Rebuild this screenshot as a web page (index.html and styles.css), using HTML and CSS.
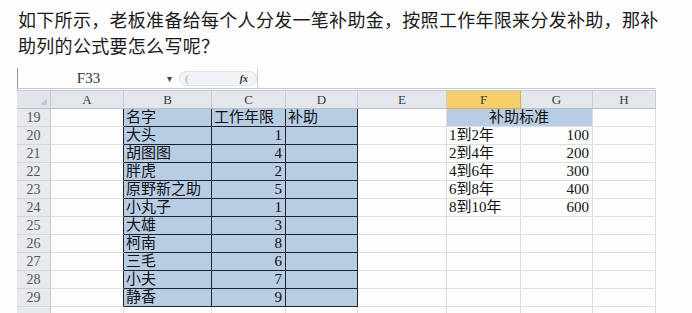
FILE: index.html
```html
<!DOCTYPE html>
<html lang="zh-CN">
<head>
    <meta charset="UTF-8">
    <title>补助公式</title>
    <link rel="stylesheet" href="styles.css">
</head>
<body>

    <p class="question">如下所示，老板准备给每个人分发一笔补助金，按照工作年限来分发补助，那补助列的公式要怎么写呢？</p>

    <div class="sheet">
        <div class="formula-bar">
            <div class="namebox">F33</div>
            <div class="drop">&#9662;</div>
            <div class="fxbox"><span class="paren">(</span><span class="fx">fx</span></div>
            <div class="formula"></div>
        </div>

        <div class="grid">
            <!-- cabecalho -->
            <div class="corner"></div>
            <div class="colhead">A</div>
            <div class="colhead">B</div>
            <div class="colhead">C</div>
            <div class="colhead">D</div>
            <div class="colhead">E</div>
            <div class="colhead active">F</div>
            <div class="colhead">G</div>
            <div class="colhead">H</div>

            <div class="rowhead">19</div>
            <div class="cell edge"></div>
            <div class="cell blk">名字</div>
            <div class="cell blk">工作年限</div>
            <div class="cell blk">补助</div>
            <div class="cell"></div>
            <div class="cell merged">补助标准</div>
            <div class="cell"></div>

            <div class="rowhead">20</div>
            <div class="cell edge"></div>
            <div class="cell blk">大头</div>
            <div class="cell blk num">1</div>
            <div class="cell blk"></div>
            <div class="cell"></div>
            <div class="cell">1到2年</div>
            <div class="cell num">100</div>
            <div class="cell"></div>

            <div class="rowhead">21</div>
            <div class="cell edge"></div>
            <div class="cell blk">胡图图</div>
            <div class="cell blk num">4</div>
            <div class="cell blk"></div>
            <div class="cell"></div>
            <div class="cell">2到4年</div>
            <div class="cell num">200</div>
            <div class="cell"></div>

            <div class="rowhead">22</div>
            <div class="cell edge"></div>
            <div class="cell blk">胖虎</div>
            <div class="cell blk num">2</div>
            <div class="cell blk"></div>
            <div class="cell"></div>
            <div class="cell">4到6年</div>
            <div class="cell num">300</div>
            <div class="cell"></div>

            <div class="rowhead">23</div>
            <div class="cell edge"></div>
            <div class="cell blk">原野新之助</div>
            <div class="cell blk num">5</div>
            <div class="cell blk"></div>
            <div class="cell"></div>
            <div class="cell">6到8年</div>
            <div class="cell num">400</div>
            <div class="cell"></div>

            <div class="rowhead">24</div>
            <div class="cell edge"></div>
            <div class="cell blk">小丸子</div>
            <div class="cell blk num">1</div>
            <div class="cell blk"></div>
            <div class="cell"></div>
            <div class="cell">8到10年</div>
            <div class="cell num">600</div>
            <div class="cell"></div>

            <div class="rowhead">25</div>
            <div class="cell edge"></div>
            <div class="cell blk">大雄</div>
            <div class="cell blk num">3</div>
            <div class="cell blk"></div>
            <div class="cell"></div>
            <div class="cell"></div>
            <div class="cell"></div>
            <div class="cell"></div>

            <div class="rowhead">26</div>
            <div class="cell edge"></div>
            <div class="cell blk">柯南</div>
            <div class="cell blk num">8</div>
            <div class="cell blk"></div>
            <div class="cell"></div>
            <div class="cell"></div>
            <div class="cell"></div>
            <div class="cell"></div>

            <div class="rowhead">27</div>
            <div class="cell edge"></div>
            <div class="cell blk">三毛</div>
            <div class="cell blk num">6</div>
            <div class="cell blk"></div>
            <div class="cell"></div>
            <div class="cell"></div>
            <div class="cell"></div>
            <div class="cell"></div>

            <div class="rowhead">28</div>
            <div class="cell edge"></div>
            <div class="cell blk">小夫</div>
            <div class="cell blk num">7</div>
            <div class="cell blk"></div>
            <div class="cell"></div>
            <div class="cell"></div>
            <div class="cell"></div>
            <div class="cell"></div>

            <div class="rowhead">29</div>
            <div class="cell edge"></div>
            <div class="cell blk">静香</div>
            <div class="cell blk num">9</div>
            <div class="cell blk"></div>
            <div class="cell"></div>
            <div class="cell"></div>
            <div class="cell"></div>
            <div class="cell"></div>

            <div class="rowhead"></div>
            <div class="cell"></div>
            <div class="cell"></div>
            <div class="cell"></div>
            <div class="cell"></div>
            <div class="cell"></div>
            <div class="cell"></div>
            <div class="cell"></div>
            <div class="cell"></div>
        </div>
    </div>

</body>
</html>
```

FILE: styles.css
```css
body {
    margin: 0;
    background: #fdfdfd;
    font-family: "Noto Sans CJK SC", sans-serif;
    color: #1a1a1a;
}

.question {
    margin: 0;
    padding: 6px 0 0 18px;
    width: 648px;
    font-size: 18px;
    line-height: 26px;
    letter-spacing: 0.3px;
}

.sheet {
    margin: 10px 0 0 17px;
    width: 639px;
}

.formula-bar {
    display: flex;
    align-items: center;
    height: 20px;
    border-left: 1px solid #9a9a9a;
    border-bottom: 3px double #c6cbd2;
    font-family: "Liberation Serif", serif;
    color: #333;
}

.namebox {
    width: 141px;
    text-align: center;
    font-size: 15px;
}

.drop {
    width: 20px;
    text-align: center;
    font-size: 10px;
    color: #444;
}

.fxbox {
    display: flex;
    justify-content: space-between;
    align-items: center;
    width: 78px;
    height: 15px;
    padding: 0 8px 0 5px;
    box-sizing: border-box;
    background: #f1f3f6;
    border: 1px solid #dfe3e8;
    border-radius: 7px;
    font-size: 11px;
}

.paren {
    color: #aab;
}

.fx {
    font-style: italic;
    font-weight: bold;
    font-size: 10px;
}

.formula {
    flex: 1;
    height: 100%;
    border-left: 1px solid #cfd3d8;
}

.grid {
    display: grid;
    grid-template-columns: 34px 73px 88px 74px 72px 89px 74px 72px 63px;
    grid-auto-rows: 18px;
}

.grid > div {
    box-sizing: border-box;
    overflow: hidden;
    white-space: nowrap;
}

.corner {
    position: relative;
    background: #e2e6eb;
    border-right: 1px solid #c3c8cf;
    border-bottom: 1px solid #b9bfc7;
}

.corner::after {
    content: "";
    position: absolute;
    right: 3px;
    bottom: 3px;
    border-left: 7px solid transparent;
    border-bottom: 7px solid #c4c9cf;
}

.colhead {
    background: #e3e7ec;
    border-right: 1px solid #c6cbd2;
    border-bottom: 1px solid #b9bfc7;
    text-align: center;
    font-family: "Liberation Serif", serif;
    font-size: 13px;
    line-height: 17px;
    color: #3a3a3a;
}

.colhead.active {
    background: #f5cf6a;
    border-right-color: #d9ae4c;
    border-bottom-color: #d9ae4c;
}

.rowhead {
    background: #e6e9ed;
    border-right: 1px solid #c3c8cf;
    border-bottom: 1px solid #d3d7dc;
    text-align: center;
    font-family: "Liberation Serif", serif;
    font-size: 14px;
    line-height: 17px;
    color: #555;
}

.cell {
    border-right: 1px solid #dcdee0;
    border-bottom: 1px solid #dcdee0;
    padding: 0 3px 0 2px;
    font-family: "Liberation Serif", "Noto Sans CJK SC", serif;
    font-size: 15px;
    line-height: 17px;
    color: #111;
}

.cell.num {
    text-align: right;
}

.cell.edge {
    border-right-color: #1c2630;
}

.cell.blk {
    background: #b8cce4;
    border-right-color: #1c2630;
    border-bottom-color: #1c2630;
}

.cell.merged {
    grid-column: span 2;
    background: #b8cce4;
    text-align: center;
}
```
